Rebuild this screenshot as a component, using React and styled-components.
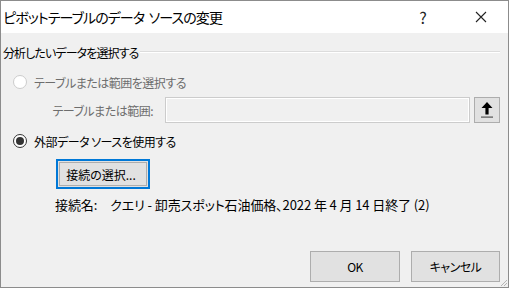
import styled, { createGlobalStyle } from "styled-components";

const GlobalStyle = createGlobalStyle`
  html, body {
    margin: 0;
    padding: 0;
    background: #ffffff;
  }
  * {
    box-sizing: border-box;
  }
`;

const font = `"Noto Sans CJK JP", "Noto Sans", sans-serif`;

export default function App() {
  return (
    <>
      <GlobalStyle />
      <Window>
        <TitleBar>
          <Title>ピボットテーブルのデータ&nbsp;&nbsp;ソースの変更</Title>
          <TitleButton>?</TitleButton>
          <TitleButton $close>
            <svg width="12" height="12" viewBox="0 0 12 12">
              <path d="M1 1 L11 11 M11 1 L1 11" stroke="#222" strokeWidth="1.1" fill="none" />
            </svg>
          </TitleButton>
        </TitleBar>
        <Body>
          <GroupHeader>
            <span>分析したいデータを選択する</span>
            <GroupLine />
          </GroupHeader>

          <RadioRow $top={10}>
            <Radio $disabled />
            <RadioLabel $disabled>テーブルまたは範囲を選択する</RadioLabel>
          </RadioRow>

          <FieldRow>
            <FieldLabel>テーブルまたは範囲:</FieldLabel>
            <RangeInput />
            <ArrowButton>
              <svg width="14" height="18" viewBox="0 0 14 18">
                <path d="M7 1 L12.5 7 L8.6 7 L8.6 13.5 L5.4 13.5 L5.4 7 L1.5 7 Z" fill="#000" />
                <rect x="1" y="15.5" width="12" height="1.2" fill="#555" />
              </svg>
            </ArrowButton>
          </FieldRow>

          <RadioRow $top={8}>
            <Radio $checked />
            <RadioLabel>外部データ&nbsp;ソースを使用する</RadioLabel>
          </RadioRow>

          <ConnectButton>接続の選択...</ConnectButton>

          <ConnectionName>
            <span>接続名:</span>
            <span>クエリ - 卸売スポット石油価格、2022 年 4 月 14 日終了 (2)</span>
          </ConnectionName>

          <Footer>
            <DialogButton $width={90}>OK</DialogButton>
            <DialogButton $width={89}>キャンセル</DialogButton>
          </Footer>
          <Grip>
            <svg width="10" height="10" viewBox="0 0 10 10">
              <path d="M9 3 L3 9 M9 6 L6 9" stroke="#b5b5b5" strokeWidth="1" />
            </svg>
          </Grip>
        </Body>
      </Window>
    </>
  );
}

const Window = styled.div`
  position: relative;
  width: 509px;
  height: 288px;
  border: 1px solid #8c8c8c;
  display: flex;
  flex-direction: column;
  font-family: ${font};
  font-feature-settings: "palt";
  color: #000;
`;

const TitleBar = styled.div`
  height: 32px;
  background: #ffffff;
  display: flex;
  align-items: center;
  padding-left: 2px;
`;

const Title = styled.div`
  flex: 1;
  font-size: 14px;
  letter-spacing: -0.9px;
  line-height: 20px;
  white-space: nowrap;
`;

const TitleButton = styled.div`
  width: ${(p) => (p.$close ? "62px" : "46px")};
  height: 32px;
  display: flex;
  align-items: center;
  justify-content: center;
  font-size: 16px;
  color: #222;
  padding-left: ${(p) => (p.$close ? "8px" : "0")};
`;

const Body = styled.div`
  position: relative;
  flex: 1;
  background: #f0f0f0;
  display: flex;
  flex-direction: column;
  padding: 9px 8px 5px 2px;
  font-size: 12px;
  letter-spacing: -0.5px;
`;

const GroupHeader = styled.div`
  height: 20px;
  display: flex;
  align-items: center;
  white-space: nowrap;
  gap: 2px;
  letter-spacing: -0.9px;
`;

const GroupLine = styled.div`
  flex: 1;
  height: 2px;
  border-top: 1px solid #dcdcdc;
  border-bottom: 1px solid #ffffff;
`;

const RadioRow = styled.div`
  height: 20px;
  margin-top: ${(p) => p.$top}px;
  display: flex;
  align-items: center;
  padding-left: 10px;
  gap: 7px;
`;

const Radio = styled.div`
  position: relative;
  width: 14px;
  height: 14px;
  border-radius: 50%;
  border: 1px solid ${(p) => (p.$disabled ? "#cccccc" : "#333333")};
  background: #ffffff;

  &::after {
    content: "";
    display: ${(p) => (p.$checked ? "block" : "none")};
    position: absolute;
    left: 2px;
    top: 2px;
    width: 8px;
    height: 8px;
    border-radius: 50%;
    background: #333333;
  }
`;

const RadioLabel = styled.span`
  color: ${(p) => (p.$disabled ? "#6d6d6d" : "#000")};
  white-space: nowrap;
`;

const FieldRow = styled.div`
  height: 26px;
  margin-top: 5px;
  display: flex;
  align-items: center;
`;

const FieldLabel = styled.span`
  width: 152px;
  text-align: right;
  padding-right: 2px;
  color: #6d6d6d;
  white-space: nowrap;
  margin-right: 10px;
`;

const RangeInput = styled.div`
  width: 305px;
  height: 26px;
  border: 1px solid #cccccc;
  box-shadow: inset 0 0 0 1px #ffffff;
  background: #f0f0f0;
`;

const ArrowButton = styled.div`
  width: 26px;
  height: 26px;
  margin-left: 4px;
  border: 1px solid #adadad;
  background: #e1e1e1;
  display: flex;
  align-items: center;
  justify-content: center;
`;

const ConnectButton = styled.div`
  width: 94px;
  height: 30px;
  margin-top: 8px;
  margin-left: 53px;
  border: 1px solid #0078d7;
  box-shadow: inset 0 0 0 1px #0078d7, inset 0 0 0 2px #e1e1e1, inset 0 0 0 3px #adadad;
  background: #e1e1e1;
  display: flex;
  align-items: center;
  justify-content: center;
  white-space: nowrap;
  letter-spacing: 0;
  padding-right: 4px;
`;

const ConnectionName = styled.div`
  height: 20px;
  margin-top: 5px;
  margin-left: 52px;
  display: flex;
  align-items: center;
  gap: 13px;
  white-space: nowrap;
  font-size: 13px;
  letter-spacing: -0.1px;
`;

const Footer = styled.div`
  margin-top: auto;
  display: flex;
  justify-content: flex-end;
  gap: 11px;
`;

const DialogButton = styled.div`
  width: ${(p) => p.$width}px;
  height: 31px;
  border: 1px solid #adadad;
  background: #e1e1e1;
  display: flex;
  align-items: center;
  justify-content: center;
`;

const Grip = styled.div`
  position: absolute;
  right: 0;
  bottom: 0;
  width: 10px;
  height: 10px;
  line-height: 0;
`;
